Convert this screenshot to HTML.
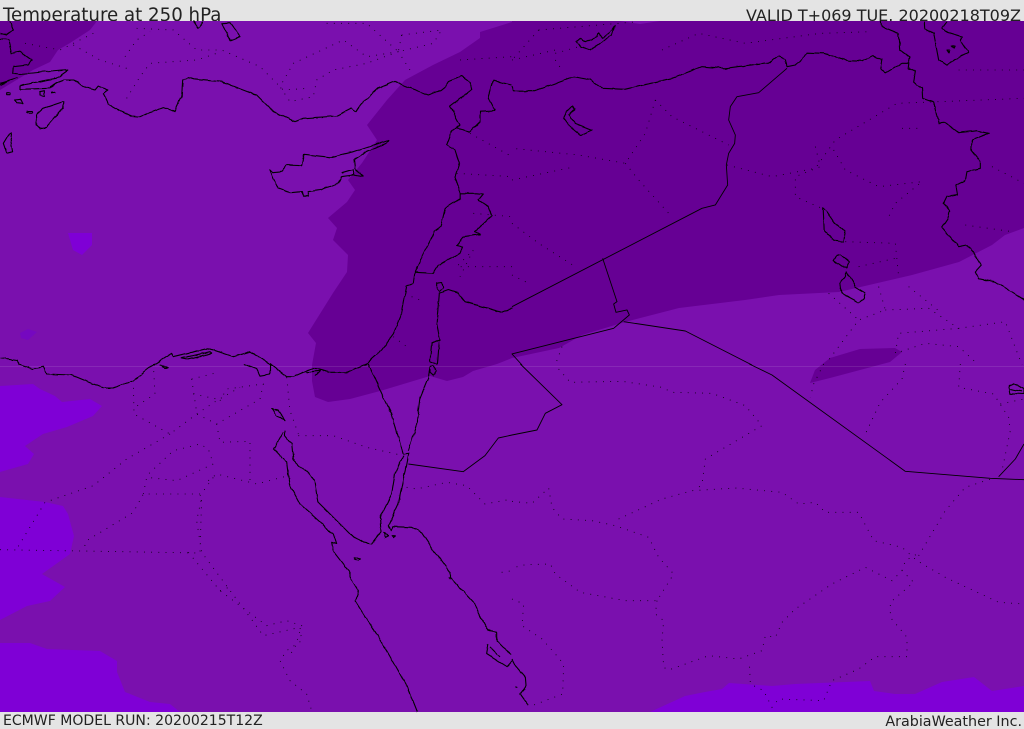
<!DOCTYPE html>
<html><head><meta charset="utf-8"><style>
html,body{margin:0;padding:0;background:#e4e4e4;width:1024px;height:729px;overflow:hidden}
svg{display:block;position:absolute;left:0;top:0}
text{font-family:"DejaVu Sans","Liberation Sans",sans-serif;fill:#222}
.c{fill:none;stroke:#000;stroke-width:3.3;stroke-linejoin:round;filter:url(#j)}
.b{fill:none;stroke:#000;stroke-width:2.7;stroke-linejoin:round}
.d{fill:none;stroke:#000;stroke-width:2.6;stroke-dasharray:2.6 19}
</style></head><body>
<svg width="1024" height="729" viewBox="0 0 1024 729">
<defs><filter id="j" filterUnits="userSpaceOnUse" x="-100" y="-100" width="1800" height="1300"><feTurbulence type="fractalNoise" baseFrequency="0.035" numOctaves="2" seed="4"/><feDisplacementMap in="SourceGraphic" scale="9" xChannelSelector="R" yChannelSelector="G"/></filter></defs>
<text x="3" y="21" font-size="18.2">Temperature at 250 hPa</text>
<text x="1021" y="21" font-size="16" text-anchor="end">VALID T+069 TUE. 20200218T09Z</text>
<text x="3" y="725" font-size="14.05">ECMWF MODEL RUN: 20200215T12Z</text>
<text x="1022" y="726" font-size="14.3" text-anchor="end">ArabiaWeather Inc.</text>
<rect x="0" y="21" width="1024" height="691" fill="#7a10ae"/>
<path fill="#660094" d="M0,21 97,21 90,30 70,43 58,50 50,62 33,70 0,90Z"/>
<path fill="#660094" d="M512,22 480,32 480,38 460,52 433,65 405,80 387,100 367,125 377,140 362,163 348,180 355,190 347,202 328,218 337,228 333,240 348,255 347,272 333,293 308,333 316,343 312,365 312,381 315,397 328,402 350,399 380,391 430,376 447,381 463,377 473,371 497,364 512,358 559,348 582,335 625,322 679,308 745,300 779,295 839,292 912,275 959,262 992,245 1005,235 1024,228 1024,21 660,21 640,24 620,21 512,21Z"/>
<path fill="#660094" d="M810,383 815,370 830,358 860,349 895,348 902,352 890,362 860,370 830,378Z"/>
<g fill="#7f00d6">
<path d="M0,386 33,384 40,389 55,396 62,402 90,399 102,406 93,416 67,427 43,434 25,446 34,454 28,464 0,472Z"/>
<path d="M0,497 45,502 63,506 68,514 74,536 70,554 42,574 65,587 50,601 27,606 0,620Z"/>
<path d="M0,643 30,643 47,649 100,651 117,661 117,672 125,692 150,702 170,704 180,712 0,712Z"/>
<path d="M650,712 685,696 705,692 722,689 729,683 772,686 795,684 870,681 874,691 895,694 915,694 942,682 974,677 992,691 1024,686 1024,712Z"/>
<path d="M68,233 92,233 92,245 82,255 73,250Z"/>
<path d="M20,333 28,329 37,332 28,340 21,338Z" fill="#7508c0"/>
</g>
<rect x="0" y="366" width="1024" height="1" fill="#fff" opacity=".1"/>
<g transform="scale(.33333)">
<path class="d" d="M1195,155 1100,190 1000,210 950,240 940,290 870,305 840,260 880,190 1030,120 1100,170 1195,155 1230,210M1205,105 1325,90 1300,130 1195,155 1205,105M410,85 520,90 590,150 665,150 780,200 850,270 925,265M220,135 300,180 380,205M375,170 410,120 450,95M380,295 420,230 450,190 590,180 665,155M980,70 1100,70 1195,155M1380,180 1536,170M1410,400 1536,470M1235,890 1260,900M1180,1010 1220,1040M1536,800 1370,800 1420,750 1380,830M1370,520 1536,530M1420,640 1536,650M75,130 180,150 280,100"/>
<path class="c" d="M30,63 40,90 20,105 0,100M0,118 25,120 35,160 60,155 95,180 85,195 40,200 38,220 60,222 205,210 170,235 100,248 60,258 60,268 150,265 170,250 190,240 220,240 250,260 285,270 295,258 325,270 310,280 325,312 365,335 395,348 420,350 490,323 525,335 545,290 548,240 565,233 580,238 665,245 770,285 820,335 885,365 910,355 1010,348 1055,325 1068,335 1085,310 1135,265 1185,244 1215,258 1285,285 1320,272 1335,260 1345,245 1385,228 1410,245 1415,270 1350,320 1380,375 1370,385 1410,395 1440,365 1440,335 1485,333 1465,295 1480,242 1536,255"/>
<path class="c" d="M810,510 820,518 845,515 860,495 905,497 912,463 990,472 1060,455 1165,420 1160,428 1100,455 1062,480 1065,505 1090,530 1060,525 1025,530 1015,550 960,570 925,575 925,590 912,590 905,575 870,578 835,565 820,535ZM1025,518 1060,508 1065,525"/>
<path class="c" d="M190,305 188,325 140,380 120,385 110,375 108,345 130,325ZM35,398 32,420 38,455 20,460 10,430 25,405ZM665,70 690,68 720,110 690,122 680,100ZM580,63 595,85 608,65M0,250 50,235 20,245 0,255M20,278 32,278 30,284 20,284ZM45,300 60,298 68,310 50,308ZM80,333 95,333 95,338 80,338ZM120,275 133,272 133,288 120,285ZM150,262 175,248M150,280 165,278"/>
<path class="c" d="M1380,375 1355,395 1340,435 1365,450 1378,490 1365,530 1382,580 1382,595 1335,625 1322,680 1305,692 1245,815 1240,850 1220,858 1205,940 1180,1000 1135,1060 1095,1095"/>
<path class="c" d="M1382,580 1430,580 1450,582 1435,600 1465,620 1475,648 1425,695 1440,703 1390,710 1370,735 1388,740 1380,760 1315,795 1300,820 1245,817"/>
<path class="c" d="M1318,880 1345,870 1375,880 1395,905 1505,937 1536,925M1318,880 1310,970 1320,1020 1295,1030 1290,1085 1312,1095 1318,1025M1310,850 1325,847 1328,865 1318,875 1310,865Z"/>
<path class="c" d="M0,1073 50,1080 60,1095M460,1095 515,1060 520,1070 625,1045 700,1070 750,1055 815,1095M545,1075 630,1055 635,1060 560,1078Z"/>
</g>
<g transform="translate(512,0) scale(.33333)">
<path class="d" d="M80,90 0,180M80,90 380,65M450,150 560,100 700,130 925,100 1080,95M130,180 150,210M0,180 130,150M130,160 200,140M430,300 480,350 650,435M430,300 400,400 340,490 200,465 0,445M340,490 380,540 470,640M0,540 190,500M0,670 80,730 190,800M0,825 50,850M645,495 780,530 910,505 970,420 1155,310 1536,295M910,440 925,500 850,530 850,590 930,625M965,450 1000,510 1100,560 1230,545 1150,610 1130,650M1440,500 1536,550M1170,385 1220,385M1360,675 1500,695M1000,725 1150,730 1160,830M1040,800 1150,775M1100,860 1120,930 1040,960 950,1080M1120,930 1250,925 1340,985 1480,965 1530,1095M1190,860 1290,940M1340,985 1160,1000 1150,1060 1240,1030 1340,1040 1400,1095M950,880 1040,960M150,1040 130,1095M1340,210 1536,210"/>
<path class="c" d="M0,258 5,272 70,272 185,230 235,240 270,265 340,268 480,235 570,200 640,205 770,188 800,167 820,178 825,200 850,195 885,158 935,160 1010,182 1050,184 1080,167 1110,178 1105,205 1120,220 1170,190 1192,190 1190,205 1210,215 1205,245 1230,265 1232,295 1265,307 1280,370 1300,368 1340,398 1395,392 1430,400 1380,420 1378,450 1405,485 1405,505 1365,515 1360,540 1330,555 1335,585 1305,590 1295,610 1313,632 1308,655 1290,682 1340,740 1365,735 1385,757 1408,795 1390,815 1400,835 1450,845 1536,900"/>
<path class="c" d="M1108,63 1110,80 1160,100 1165,150 1195,172 1192,190M1237,65 1238,85 1265,100 1280,180 1305,197 1325,180 1370,158 1345,120 1350,110 1300,95 1290,85 1305,65M1305,150 1312,150 1310,160ZM1318,138 1328,140 1325,146Z"/>
<path class="b" d="M825,205 740,278 675,290 655,320 650,360 670,405 668,430 650,460 643,495 647,555 610,615 570,625 0,920M272,775 315,905 305,912 312,937 345,930 352,945 305,985 0,1062 30,1095M335,965 520,993 720,1095"/>
<path class="c" d="M193,125 205,115 220,125 255,110 260,100 270,115 300,90 308,78 300,105 270,125 235,150 205,140ZM182,318 188,328 170,345 190,370 240,390 205,405 170,375 155,355 165,335ZM932,625 945,635 970,670 1000,695 995,725 965,722 935,690ZM975,765 985,762 1012,785 1005,802 990,800 965,782ZM1003,815 1030,860 1060,878 1055,895 1040,907 990,880 985,850 1000,830Z"/>
</g>
<g transform="translate(0,364) scale(.33333)">
<path class="d" d="M400,50 402,150 510,210 590,150 650,110 720,70M460,0 465,90 405,130M575,45 655,25M575,45 590,145M580,90 650,105M660,110 680,75 790,60 780,105 650,180 590,150M510,210 380,285 280,365 135,415 50,555M0,557 600,567 605,400 590,470 605,565 750,760 790,815 900,790 905,830 860,860 840,890 870,950 920,990 935,1040M600,390 430,390 400,445 260,530 250,557M430,390 440,340 530,350 640,300 625,255 600,240 520,260 440,335M625,350 650,330 770,360 865,335M600,395 640,340M650,180 660,235 750,232 750,350M895,215 1000,215 1100,250 1210,275M860,40 870,140 895,210M565,565 660,680 800,785 860,770 905,785 885,850 865,880M1220,370 1250,375 1340,355 1400,365 1455,420 1536,405M660,680 700,665M1505,625 1536,620"/>
<path class="c" d="M55,0 100,15 130,8 140,30 215,33 310,72 340,72 400,50 465,0M480,5 505,8 495,12ZM730,0 770,15 780,35 810,30 810,0M810,0 860,38 880,38 940,12 990,25 1040,25 1100,0M920,25 960,20 945,35"/>
<path class="c" d="M1105,0 1155,110 1175,150 1210,270M1290,10 1285,40 1260,100 1250,180 1225,260M1290,10 1300,5 1310,20 1300,32 1290,25Z"/>
<path class="c" d="M1210,270 1225,268 1215,320 1195,420 1165,485 1175,500 1180,488 1235,490 1265,505 1305,565 1350,625 1350,640 1420,715 1465,800 1490,805 1490,830 1510,850 1535,870M1210,275 1185,330 1175,390 1140,460 1143,505 1115,540 1090,535 1050,510 955,415 945,350 880,285 875,240 855,215 855,200M850,205 822,255 860,295 868,360 900,420 1000,510 1010,540 995,535 1000,560 1050,625 1050,640 1075,680 1065,710 1160,860 1225,975 1252,1043"/>
<path class="c" d="M815,135 835,140 855,170 830,155ZM1065,580 1080,585 1075,590 1063,585ZM1150,508 1165,515 1155,520ZM1178,515 1188,515 1183,520ZM1465,840 1460,870 1520,908 1536,890M1470,850 1500,880M1345,640 1350,645"/>
<path class="b" d="M1225,300 1390,323 1455,275 1495,222 1536,213"/>
</g>
<g transform="translate(512,364) scale(.33333)">
<path class="d" d="M140,15 175,55 330,52 450,70 480,85 600,88 700,125 750,185 580,285 570,360 555,375M320,465 450,405 540,380 670,372 810,385 860,420 910,415 940,445 1040,445 1085,530 1170,550 1215,590 1300,640 1460,715 1536,720M1220,575 1300,440 1360,370 1436,345M1170,620 1180,590 1215,570M0,412 60,418 110,372 120,430 150,465 240,470 310,485 410,520 440,580 485,630 435,710 340,710 205,685 130,630 115,600 40,602 0,612M435,710 430,750 455,770 450,830 455,910 470,918 590,875 680,885 750,860 760,815 790,820 810,775 850,735 960,660 1060,610 1140,650 1170,620 1205,655 1135,715 1135,760 1185,820 1185,878 1090,878 1040,915 960,950 935,1010 800,1005 780,1030 755,980 715,960 712,890M0,705 35,720 30,785 90,825 130,870 155,900 152,990 60,1025M1345,0 1340,70 1445,90 1490,160 1495,200 1470,320M1465,120 1536,105M1180,0 1170,45 1105,115 1060,210M935,0 905,60 895,100"/>
<path class="b" d="M0,213 75,198 100,148 150,122 25,0M712,0 780,33 1180,322 1435,343 1536,347M1460,338 1510,285 1536,240"/>
<path class="c" d="M1490,65 1505,58 1536,75 1536,90 1495,88ZM1495,75 1530,82M0,885 10,905 40,940 42,965 25,990 50,1025M10,970 16,972"/>
</g>
</svg>
</body></html>
